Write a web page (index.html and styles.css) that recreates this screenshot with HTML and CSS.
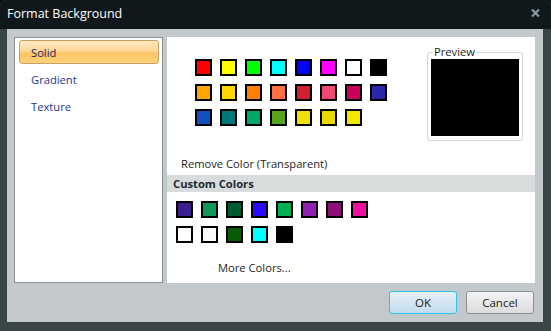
FILE: index.html
```html
<!DOCTYPE html>
<html lang="en">
  <head>
    <meta charset="UTF-8" />
    <title>Format Background</title>
    <link rel="stylesheet" href="styles.css">
  </head>
  <body>
    <div class="window">
      <div class="titlebar">
        <span class="title">Format Background</span>
        <svg class="close" width="9" height="8" viewBox="0 0 9 8">
          <path d="M1 0.5 L8 7.5 M8 0.5 L1 7.5" stroke="#8797a0" stroke-width="2.2" />
        </svg>
      </div>
      <div class="frame">
        <div class="main">
          <ul class="fill-list">
            <li class="item selected">Solid</li>
            <li class="item">Gradient</li>
            <li class="item">Texture</li>
          </ul>
          <div class="panel">
            <div class="top">
              <div class="swatches standard">
                <span class="sw" style="background:#ff0000"></span>
                <span class="sw" style="background:#ffff00"></span>
                <span class="sw" style="background:#00ff00"></span>
                <span class="sw" style="background:#00ffff"></span>
                <span class="sw" style="background:#0000ff"></span>
                <span class="sw" style="background:#ff00ff"></span>
                <span class="sw" style="background:#ffffff"></span>
                <span class="sw" style="background:#000000"></span>
                <span class="sw" style="background:#ffa500"></span>
                <span class="sw" style="background:#ffd700"></span>
                <span class="sw" style="background:#ff7f00"></span>
                <span class="sw" style="background:#ff7043"></span>
                <span class="sw" style="background:#d02030"></span>
                <span class="sw" style="background:#f04870"></span>
                <span class="sw" style="background:#c8005a"></span>
                <span class="sw" style="background:#2828a8"></span>
                <span class="sw" style="background:#1050c0"></span>
                <span class="sw" style="background:#007878"></span>
                <span class="sw" style="background:#00a868"></span>
                <span class="sw" style="background:#58a41c"></span>
                <span class="sw" style="background:#f0e000"></span>
                <span class="sw" style="background:#e8d800"></span>
                <span class="sw" style="background:#f2e800"></span>
              </div>
              <fieldset class="preview">
                <legend>Preview</legend>
                <div class="preview-box"></div>
              </fieldset>
            </div>
            <div class="remove">Remove Color (Transparent)</div>
            <div class="section-head">Custom Colors</div>
            <div class="swatches custom">
              <span class="sw" style="background:#3c1e8c"></span>
              <span class="sw" style="background:#10985a"></span>
              <span class="sw" style="background:#005a32"></span>
              <span class="sw" style="background:#2a0aff"></span>
              <span class="sw" style="background:#00b050"></span>
              <span class="sw" style="background:#9020b0"></span>
              <span class="sw" style="background:#8c1078"></span>
              <span class="sw" style="background:#f010a0"></span>
              <span class="sw" style="background:#ffffff"></span>
              <span class="sw" style="background:#fafafa"></span>
              <span class="sw" style="background:#0a5a0a"></span>
              <span class="sw" style="background:#00ffff"></span>
              <span class="sw" style="background:#000000"></span>
            </div>
            <div class="more">More Colors...</div>
          </div>
        </div>
        <div class="buttons">
          <button class="btn btn-ok">OK</button>
          <button class="btn">Cancel</button>
        </div>
      </div>
    </div>
  </body>
</html>
```

FILE: styles.css
```css
/* dialog */
html,
body {
  margin: 0;
  padding: 0;
  background: #0b0f12;
}
body {
  font-family: "Open Sans", "Noto Sans", sans-serif;
  font-size: 11.2px;
  color: #1e1e1e;
}

.window {
  width: 551px;
  height: 331px;
  display: flex;
  flex-direction: column;
  border-radius: 6px 6px 0 0;
  overflow: hidden;
  background: #3a4547;
}

.titlebar {
  height: 29px;
  flex: none;
  display: flex;
  align-items: center;
  justify-content: space-between;
  padding: 0 11px 0 7px;
  background: #10181c;
  box-sizing: border-box;
}
.title {
  color: #ffffff;
  font-size: 12.5px;
  margin-top: -2px;
}
.close {
  margin-top: -4px;
}

.frame {
  flex: 1;
  margin: 0 8px 9px 7px;
  background: #c3c8ca;
  padding: 8px 8px 8px 7px;
  display: flex;
  flex-direction: column;
}

.main {
  height: 246px;
  display: flex;
  gap: 4px;
}

.fill-list {
  list-style: none;
  margin: 0;
  width: 149px;
  box-sizing: border-box;
  border: 1px solid #8a9096;
  background: #ffffff;
  padding: 2px 3px 0 4px;
}
.item {
  height: 24px;
  line-height: 24px;
  margin-bottom: 3px;
  padding-left: 11px;
  color: #22388a;
  border: 1px solid transparent;
  box-sizing: border-box;
}
.item.selected {
  color: #1c1c66;
  border-color: #c8a264;
  border-radius: 3px;
  background: linear-gradient(#fee9c4 0%, #fdd696 45%, #fcc364 55%, #fdd27c 100%);
}

.panel {
  flex: 1;
  background: #ffffff;
  display: flex;
  flex-direction: column;
}

.top {
  display: flex;
  justify-content: space-between;
  padding: 8px 12px 0 28px;
  height: 104px;
  box-sizing: border-box;
}

.swatches {
  display: grid;
  grid-template-columns: repeat(8, 17px);
  grid-auto-rows: 17px;
  gap: 8px;
}
.standard {
  margin-top: 14px;
  align-self: flex-start;
}
.sw {
  box-sizing: border-box;
  border: 2px solid #000000;
}

.preview {
  margin: 0;
  padding: 0 3px 3px 3px;
  border: 1px solid #d0d6dc;
  border-radius: 3px;
  width: 96px;
  height: 96px;
  box-sizing: border-box;
}
.preview legend {
  font-size: 11.2px;
  line-height: 14px;
  padding: 0 1px;
  margin-left: 2px;
}
.preview-box {
  width: 88px;
  height: 77px;
  background: #000000;
}

.remove {
  margin-top: 15px;
  padding-left: 14px;
  line-height: 16px;
}

.section-head {
  margin-top: 3px;
  height: 17px;
  line-height: 17px;
  padding-left: 6px;
  background: #d8dcdd;
  font-weight: bold;
  color: #1e2a30;
}

.custom {
  margin-top: 9px;
  padding-left: 9px;
}

.more {
  margin-top: 17px;
  padding-left: 51px;
  line-height: 16px;
}

.buttons {
  margin-top: 8px;
  display: flex;
  justify-content: flex-end;
  gap: 9px;
  padding-right: 1px;
}
.btn {
  width: 68px;
  height: 23px;
  font-family: inherit;
  font-size: 11.5px;
  color: #1a1a1a;
  border: 1px solid #8a9196;
  border-radius: 3px;
  background: linear-gradient(#f4f4f4, #dcdcdc);
  padding: 0;
}
.btn-ok {
  border-color: #2cc2ee;
  background: linear-gradient(#e8f0f6, #c2dcec);
}
```
